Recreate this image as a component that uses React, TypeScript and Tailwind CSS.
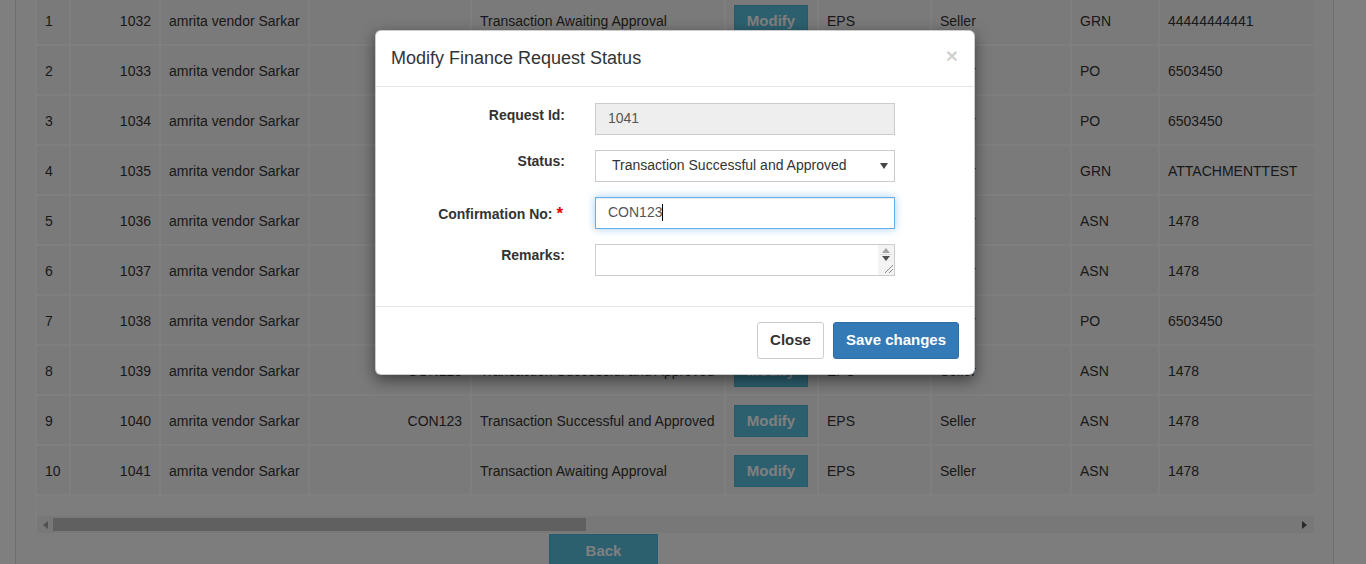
import React from "react";

type Row = { n: number; id: number; conf: string; status: string; type: string; ref: string };

const AW = "Transaction Awaiting Approval";
const OK = "Transaction Successful and Approved";

const rows: Row[] = [
  { n: 1, id: 1032, conf: "", status: AW, type: "GRN", ref: "44444444441" },
  { n: 2, id: 1033, conf: "", status: AW, type: "PO", ref: "6503450" },
  { n: 3, id: 1034, conf: "", status: AW, type: "PO", ref: "6503450" },
  { n: 4, id: 1035, conf: "", status: AW, type: "GRN", ref: "ATTACHMENTTEST" },
  { n: 5, id: 1036, conf: "", status: AW, type: "ASN", ref: "1478" },
  { n: 6, id: 1037, conf: "", status: AW, type: "ASN", ref: "1478" },
  { n: 7, id: 1038, conf: "", status: AW, type: "PO", ref: "6503450" },
  { n: 8, id: 1039, conf: "CON123", status: OK, type: "ASN", ref: "1478" },
  { n: 9, id: 1040, conf: "CON123", status: OK, type: "ASN", ref: "1478" },
  { n: 10, id: 1041, conf: "", status: AW, type: "ASN", ref: "1478" },
];

const base = "h-[50px] flex items-center px-[8px] border-r-2 border-b-2 border-white bg-[#f5f5f5] whitespace-nowrap overflow-hidden";
const cell = base + " pt-[2px]";

function TableRow({ r }: { r: Row }) {
  return (
    <div className="grid grid-cols-[34px_90px_149px_162px_254px_93px_113px_140px_88px_300px_300px]">
      <div className={cell}>{r.n}</div>
      <div className={cell + " justify-end"}>{r.id}</div>
      <div className={cell}>amrita vendor Sarkar</div>
      <div className={cell + " justify-end"}>{r.conf}</div>
      <div className={cell}>{r.status}</div>
      <div className={cell}>
        <div className="h-[32px] w-[74px] flex items-center justify-center bg-[#5bc0de] border border-[#46b8da] text-white font-bold text-[15px]">
          Modify
        </div>
      </div>
      <div className={cell}>EPS</div>
      <div className={cell}>Seller</div>
      <div className={cell}>{r.type}</div>
      <div className={cell}>{r.ref}</div>
      <div className={cell}></div>
    </div>
  );
}

function Label({ children, extra = "" }: { children: React.ReactNode; extra?: string }) {
  return (
    <div className={"w-[174px] shrink-0 text-right font-bold text-[14px] leading-[20px] text-[#333] " + extra}>
      {children}
    </div>
  );
}

export default function App() {
  return (
    <div className="relative h-[564px] overflow-hidden bg-white font-['Liberation_Sans',Arial,sans-serif] text-[14px] text-[#333]">
      {/* page */}
      <div className="ml-[15px] w-[1319px] min-h-[600px] border-x border-[#dcdcdc] bg-[#fbfbfb] pl-[19px]">
        <div className="-mt-[4px] w-[1279px] overflow-hidden border-l-2 border-white">
          <div className="w-[1900px] leading-[20px]">
            {rows.map((r) => (
              <TableRow key={r.n} r={r} />
            ))}
          </div>
          <div className="h-[20px]" />
          {/* scrollbar */}
          <div className="h-[17px] w-[1277px] bg-[#f1f1f1] flex items-center">
            <div className="w-[16px] h-[17px] flex items-center justify-center">
              <svg width="5" height="8" viewBox="0 0 5 8">
                <path d="M5 0 L0 4 L5 8 Z" fill="#a3a3a3" />
              </svg>
            </div>
            <div className="h-[13px] w-[533px] bg-[#c1c1c1]" />
            <div className="flex-1" />
            <div className="w-[16px] h-[17px] mr-[2px] flex items-center justify-center">
              <svg width="5" height="8" viewBox="0 0 5 8">
                <path d="M0 0 L5 4 L0 8 Z" fill="#505050" />
              </svg>
            </div>
          </div>
        </div>
        <div className="mt-[1px] ml-[514px] h-[34px] w-[109px] flex items-center justify-center bg-[#5bc0de] border border-[#46b8da] text-white font-bold text-[15px]">
          Back
        </div>
      </div>

      {/* backdrop */}
      <div className="absolute inset-0 bg-black/50" />

      {/* modal */}
      <div className="absolute left-[375px] top-[30px] w-[600px] bg-white border border-black/20 rounded-[6px] shadow-[0_5px_15px_rgba(0,0,0,0.5)]">
        <div className="flex items-start justify-between px-[15px] pt-[15px] pb-[14px] border-b border-[#e5e5e5]">
          <div className="text-[18px] leading-[25.7px] text-[#333]">Modify Finance Request Status</div>
          <div className="text-[21px] font-bold leading-[21px] text-black/20 -mt-[1px] mr-[1px]">×</div>
        </div>
        <div className="px-[15px] pt-[16px] pb-[15px]">
          <div className="flex items-start gap-[30px] mb-[15px]">
            <Label extra="pt-[2px]">Request Id:</Label>
            <div className="w-[300px] h-[32px] flex items-center px-[12px] bg-[#eeeeee] border border-[#cccccc] text-[#555] text-[14px]">
              1041
            </div>
          </div>
          <div className="flex items-start gap-[30px] mb-[15px]">
            <Label extra="pt-[1px]">Status:</Label>
            <div className="w-[300px] h-[32px] flex items-center justify-between pl-[16px] pr-[6px] bg-white border border-[#cccccc] text-[#333] text-[14px]">
              <span>Transaction Successful and Approved</span>
              <svg width="8" height="6" viewBox="0 0 8 6">
                <path d="M0 0 L8 0 L4 6 Z" fill="#444" />
              </svg>
            </div>
          </div>
          <div className="flex items-start gap-[30px] mb-[15px]">
            <Label extra="pt-[7px] pr-[2px]">
              Confirmation No: <span className="text-[17px] leading-none text-[#e00000]">*</span>
            </Label>
            <div className="w-[300px] h-[32px] flex items-center px-[12px] bg-white border border-[#66afe9] shadow-[inset_0_1px_1px_rgba(0,0,0,0.075),0_0_8px_rgba(102,175,233,0.6)] text-[#555] text-[14px]">
              <span>CON123</span>
              <span className="w-px h-[17px] bg-black" />
            </div>
          </div>
          <div className="flex items-start gap-[30px] mb-[15px]">
            <Label extra="pt-[1px]">Remarks:</Label>
            <div className="w-[300px] h-[32px] flex justify-end bg-white border border-[#cccccc]">
              <div className="w-[16px] h-full bg-[#f3f3f3] flex flex-col items-center">
                <svg width="8" height="5" viewBox="0 0 8 5" className="mt-[3px]">
                  <path d="M0 5 L4 0 L8 5 Z" fill="#a3a3a3" />
                </svg>
                <div className="w-[12px] h-px bg-[#dcdcdc] my-[1px]" />
                <svg width="8" height="5" viewBox="0 0 8 5">
                  <path d="M0 0 L8 0 L4 5 Z" fill="#505050" />
                </svg>
                <div className="flex-1" />
                <svg width="12" height="12" viewBox="0 0 12 12" className="mb-[1px] self-end">
                  <path d="M11 3 L3 11 M11 7 L7 11" stroke="#8a8a8a" strokeWidth="1" />
                </svg>
              </div>
            </div>
          </div>
        </div>
        <div className="flex justify-end gap-[9px] p-[15px] border-t border-[#e5e5e5]">
          <div className="h-[37px] px-[12px] flex items-center bg-white border border-[#cccccc] rounded-[3px] text-[#333] font-bold text-[15px]">
            Close
          </div>
          <div className="h-[37px] px-[12px] flex items-center bg-[#337ab7] border border-[#2e6da4] rounded-[3px] text-white font-bold text-[15px]">
            Save changes
          </div>
        </div>
      </div>
    </div>
  );
}
